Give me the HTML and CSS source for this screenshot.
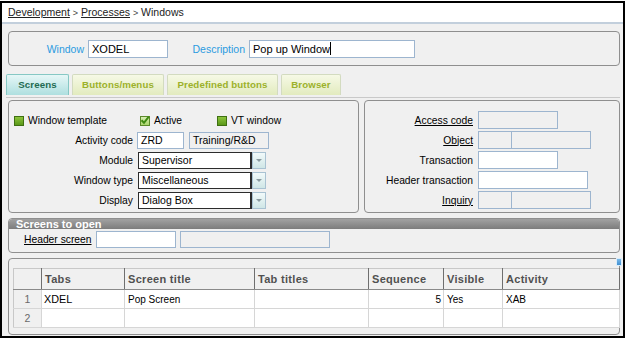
FILE: index.html
```html
<!DOCTYPE html>
<html>
<head>
<meta charset="utf-8">
<link rel="stylesheet" href="styles.css">
</head>
<body>
<div class="frame">
  <div class="crumb"><span class="u">Development</span> <span class="gt">&gt;</span> <span class="u">Processes</span> <span class="gt">&gt;</span> Windows</div>
  <div class="content">
    <div class="panel head">
      <span class="hlbl w1">Window</span>
      <span class="inp white iw1">XODEL</span>
      <span class="hlbl w2">Description</span>
      <span class="inp white iw2">Pop up Window<span class="caret"></span></span>
    </div>

    <div class="tabs">
      <span class="tab active t1">Screens</span>
      <span class="tab t2">Buttons/menus</span>
      <span class="tab t3">Predefined buttons</span>
      <span class="tab t4">Browser</span>
    </div>

    <div class="duo">
      <div class="panel leftp">
        <div class="row checks">
          <span class="ck c1"><span class="box"></span>Window template</span>
          <span class="ck c2"><span class="box checked"><svg width="10" height="10" viewBox="0 0 10 10"><path d="M1.5 5.2 L4 7.8 L8.8 1.6" fill="none" stroke="#3f8a12" stroke-width="2"/></svg></span>Active</span>
          <span class="ck c3"><span class="box"></span>VT window</span>
        </div>
        <div class="row">
          <span class="lab">Activity code</span>
          <span class="inp white iw-zrd">ZRD</span>
          <span class="inp grey iw-tr">Training/R&amp;D</span>
        </div>
        <div class="row">
          <span class="lab">Module</span>
          <span class="sel">Supervisor</span><span class="ddb"><span class="arrow"></span></span>
        </div>
        <div class="row">
          <span class="lab">Window type</span>
          <span class="sel">Miscellaneous</span><span class="ddb"><span class="arrow"></span></span>
        </div>
        <div class="row">
          <span class="lab">Display</span>
          <span class="sel">Dialog Box</span><span class="ddb"><span class="arrow"></span></span>
        </div>
      </div>
      <div class="panel rightp">
        <div class="row">
          <span class="rlab u">Access code</span>
          <span class="inp grey iw80"></span>
        </div>
        <div class="row">
          <span class="rlab u">Object</span>
          <span class="inp grey iw34"></span><span class="inp grey iw80 joined"></span>
        </div>
        <div class="row">
          <span class="rlab">Transaction</span>
          <span class="inp white iw80"></span>
        </div>
        <div class="row">
          <span class="rlab">Header transaction</span>
          <span class="inp white iw110"></span>
        </div>
        <div class="row">
          <span class="rlab u">Inquiry</span>
          <span class="inp grey iw34"></span><span class="inp grey iw80 joined"></span>
        </div>
      </div>
    </div>

    <div class="panel sto">
      <div class="bar">Screens to open</div>
      <div class="row hs">
        <span class="u hslab">Header screen</span>
        <span class="inp white iw80"></span>
        <span class="inp grey iw150"></span>
      </div>
    </div>

    <div class="panel gridp">
      <span class="marker"></span>
      <table class="grid">
        <colgroup>
          <col class="cn"><col class="c-tabs"><col class="c-st"><col class="c-tt"><col class="c-seq"><col class="c-vis"><col class="c-act">
        </colgroup>
        <thead>
          <tr><th></th><th>Tabs</th><th>Screen title</th><th>Tab titles</th><th>Sequence</th><th>Visible</th><th>Activity</th></tr>
        </thead>
        <tbody>
          <tr><td class="num">1</td><td class="big">XDEL</td><td>Pop Screen</td><td></td><td class="r">5</td><td>Yes</td><td>XAB</td></tr>
          <tr><td class="num">2</td><td></td><td></td><td></td><td></td><td></td><td></td></tr>
        </tbody>
      </table>
    </div>
  </div>
</div>
</body>
</html>
```

FILE: styles.css
```css
html, body {
  margin: 0;
  padding: 0;
  background: #fff;
}
body {
  font-family: "Liberation Sans", Arial, sans-serif;
  font-size: 10.3px;
  color: #000;
}
.frame {
  margin-top: 1px;
  width: 625px;
  height: 337px;
  box-sizing: border-box;
  border: 2px solid #000;
  background: #f0f0f0;
  display: flex;
  flex-direction: column;
  overflow: hidden;
}
.crumb {
  height: 19px;
  line-height: 19px;
  background: #fff;
  padding-left: 6px;
  font-size: 10.5px;
  color: #222;
  border-bottom: 2px solid #c2cfdc;
}
.crumb .gt {
  font-size: 9px;
  color: #444;
}
.u {
  text-decoration: underline;
}
.content {
  padding: 0 3px 0 6px;
  display: flex;
  flex-direction: column;
}
.panel {
  border: 1px solid #8f8f8f;
  border-radius: 4px;
  box-sizing: border-box;
  background: #f0f0f0;
}
.head {
  margin-top: 7px;
  height: 35px;
  display: flex;
  align-items: center;
}
.hlbl {
  color: #2b9be0;
  text-align: right;
  box-sizing: border-box;
  padding-right: 4px;
  font-size: 10.5px;
}
.w1 { width: 79px; }
.w2 { width: 81px; }
.inp {
  display: inline-block;
  box-sizing: border-box;
  height: 18px;
  line-height: 16px;
  border: 1px solid #9db5cf;
  padding-left: 3px;
  font-size: 10.5px;
  white-space: nowrap;
  overflow: hidden;
}
.white { background: #fff; }
.grey { background: #f0f0f0; }
.head .inp { font-size: 11px; }
.iw1 { width: 80px; }
.iw2 { width: 166px; }
.caret {
  display: inline-block;
  width: 1px;
  height: 13px;
  background: #000;
  vertical-align: -2px;
}

.tabs {
  margin-top: 8px;
  margin-left: -2px;
  height: 24px;
  box-sizing: border-box;
  border-bottom: 1px solid #c9c9c9;
  display: flex;
  align-items: flex-start;
  gap: 3px;
}
.tab {
  height: 21px;
  box-sizing: border-box;
  line-height: 20px;
  text-align: center;
  font-weight: bold;
  font-size: 9.7px;
  letter-spacing: 0.1px;
  border: 1px solid #d3dbc0;
  border-bottom: none;
  border-radius: 2px 2px 0 0;
  background: linear-gradient(#f6f9e6, #e2ebbe);
  color: #9cb12a;
}
.tab.active {
  background: linear-gradient(#e6f7f7, #aedfdf);
  border-color: #86c8c4;
  color: #236a52;
}
.t1 { width: 63px; }
.t2 { width: 92px; }
.t3 { width: 111px; }
.t4 { width: 60px; }

.duo {
  margin-top: 2px;
  display: flex;
  gap: 5px;
  height: 113px;
}
.leftp {
  width: 351px;
  padding-top: 11px;
  display: flex;
  flex-direction: column;
  gap: 3px;
}
.rightp {
  flex: 1;
  padding-top: 10px;
  display: flex;
  flex-direction: column;
  gap: 2px;
}
.row {
  display: flex;
  align-items: center;
  height: 17px;
}
.rightp .row { height: 18px; }
.checks {
  padding-left: 5px;
}
.ck {
  display: flex;
  align-items: center;
}
.c1 { width: 126px; }
.c2 { width: 77px; }
.box {
  width: 10px;
  height: 10px;
  box-sizing: border-box;
  margin-right: 4px;
  border: 1px solid #3f7012;
  background: linear-gradient(#8cc43c, #5a9818);
  position: relative;
}
.box.checked {
  background: linear-gradient(#d7eeb4, #a9d46a);
  border-color: #5c8a2a;
}
.box svg {
  position: absolute;
  left: -1px;
  top: -2px;
}
.lab {
  width: 128px;
  text-align: right;
  padding-right: 4px;
  box-sizing: border-box;
}
.leftp .inp { height: 17px; line-height: 15px; }
.iw-zrd { width: 47px; margin-right: 5px; }
.iw-tr { width: 80px; }
.sel {
  margin-left: 1px;
  width: 114px;
  height: 17px;
  box-sizing: border-box;
  border: 1px solid #2c2c2c;
  border-right-width: 2px;
  background: #fff;
  line-height: 15px;
  padding-left: 3px;
  font-size: 10.5px;
}
.ddb {
  width: 14px;
  height: 17px;
  box-sizing: border-box;
  border: 1px solid #a9c2d2;
  background: linear-gradient(#f2fafa, #cfe6e6);
  display: flex;
  align-items: center;
  justify-content: center;
}
.arrow {
  width: 0;
  height: 0;
  border-left: 3px solid transparent;
  border-right: 3px solid transparent;
  border-top: 3px solid #8a9aa0;
}
.rlab {
  width: 113px;
  text-align: right;
  padding-right: 5px;
  box-sizing: border-box;
}
.iw80 { width: 80px; }
.iw34 { width: 34px; }
.iw110 { width: 110px; }
.iw150 { width: 150px; }
.joined { margin-left: -1px; }

.sto {
  margin-top: 5px;
  height: 35px;
  overflow: hidden;
}
.bar {
  height: 10px;
  line-height: 10px;
  background: linear-gradient(#a2a2a2, #7c7c7c);
  color: #fff;
  font-weight: bold;
  font-size: 11px;
  padding-left: 7px;
  border-radius: 3px 3px 0 0;
}
.hs {
  margin-top: 2px;
  padding-left: 15px;
  height: 17px;
}
.hs .inp { height: 17px; }
.hslab { width: 72px; }
.hs .iw80 { margin-right: 4px; }

.gridp {
  margin-top: 5px;
  height: 77px;
  padding: 9px 0 0 4px;
  position: relative;
}
.marker {
  position: absolute;
  right: -3px;
  top: -1px;
  width: 6px;
  height: 8px;
  background: linear-gradient(#7ab8e8, #3f8fd2);
  border: 1px solid #d8ecfa;
  box-sizing: border-box;
}
.grid {
  border-collapse: collapse;
  table-layout: fixed;
  width: 606px;
}
.cn { width: 28px; }
.c-tabs { width: 83px; }
.c-st { width: 130px; }
.c-tt { width: 114px; }
.c-seq { width: 75px; }
.c-vis { width: 59px; }
.c-act { width: 117px; }
.grid th {
  height: 21px;
  padding: 0 0 0 3px;
  text-align: left;
  background: #f0f0f0;
  color: #505050;
  font-weight: bold;
  font-size: 11px;
  letter-spacing: 0.3px;
  border-right: 1px solid #6f6f6f;
  border-bottom: 1px solid #8a8a8a;
  border-top: 1px solid #c8c8c8;
  box-sizing: border-box;
}
.grid th:first-child {
  border-left: 1px solid #c8c8c8;
}
.grid td {
  height: 19px;
  padding: 0 0 0 3px;
  background: #fff;
  border-right: 1px solid #d6d6d6;
  border-bottom: 1px solid #d6d6d6;
  font-size: 10px;
  white-space: nowrap;
  box-sizing: border-box;
}
.grid td.big { font-size: 10.8px; padding-left: 2px; }
.grid td.num {
  background: #f0f0f0;
  color: #6a6a6a;
  text-align: center;
  padding: 0;
  border-left: 1px solid #c8c8c8;
  font-size: 10.5px;
}
.grid td.r {
  text-align: right;
  padding-right: 2px;
}
```
